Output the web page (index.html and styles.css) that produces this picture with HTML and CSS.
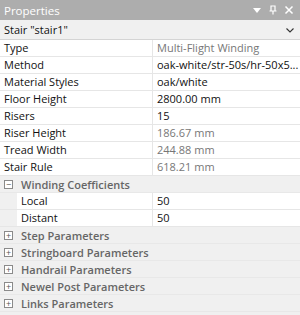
FILE: index.html
```html
<!DOCTYPE html>
<html>
<head>
<meta charset="utf-8">
<link rel="stylesheet" href="styles.css">
</head>
<body>
<div class="panel">
  <div class="title">
    <span class="title-text">Properties</span>
    <span class="title-icons">
      <svg width="10" height="10" viewBox="0 0 10 10"><path d="M1 3 L9 3 L5 8 Z" fill="#fff"/></svg>
      <svg width="10" height="10" viewBox="0 0 10 10"><path d="M3 1 H7 V6 H3 Z M1.5 6 H8.5 M5 6 V9.5" stroke="#fff" stroke-width="1.2" fill="none"/></svg>
      <svg width="10" height="10" viewBox="0 0 10 10"><path d="M1.5 1.5 L8.5 8.5 M8.5 1.5 L1.5 8.5" stroke="#fff" stroke-width="1.5"/></svg>
    </span>
  </div>
  <div class="combo">
    <span>Stair "stair1"</span>
    <svg width="10" height="8" viewBox="0 0 10 8"><path d="M1.5 2.5 L5 6 L8.5 2.5" stroke="#333" stroke-width="1.1" fill="none"/></svg>
  </div>
  <div class="grid">
    <div class="row"><div class="k">Type</div><div class="v ro">Multi-Flight Winding</div></div>
    <div class="row"><div class="k">Method</div><div class="v">oak-white/str-50s/hr-50x5...</div></div>
    <div class="row"><div class="k">Material Styles</div><div class="v">oak/white</div></div>
    <div class="row"><div class="k">Floor Height</div><div class="v">2800.00 mm</div></div>
    <div class="row"><div class="k">Risers</div><div class="v">15</div></div>
    <div class="row"><div class="k">Riser Height</div><div class="v ro">186.67 mm</div></div>
    <div class="row"><div class="k">Tread Width</div><div class="v ro">244.88 mm</div></div>
    <div class="row"><div class="k">Stair Rule</div><div class="v ro">618.21 mm</div></div>
    <div class="cat"><span class="box">&minus;</span><span class="cat-text">Winding Coefficients</span></div>
    <div class="row sub"><div class="k">Local</div><div class="v">50</div></div>
    <div class="row sub"><div class="k">Distant</div><div class="v">50</div></div>
    <div class="cat"><span class="box">+</span><span class="cat-text">Step Parameters</span></div>
    <div class="cat"><span class="box">+</span><span class="cat-text">Stringboard Parameters</span></div>
    <div class="cat"><span class="box">+</span><span class="cat-text">Handrail Parameters</span></div>
    <div class="cat"><span class="box">+</span><span class="cat-text">Newel Post Parameters</span></div>
    <div class="cat"><span class="box">+</span><span class="cat-text">Links Parameters</span></div>
  </div>
</div>
</body>
</html>
```
FILE: styles.css
```css
html, body { margin: 0; padding: 0; }
body {
  width: 300px; height: 315px; overflow: hidden;
  background: #f0f0f0;
  font-family: "Open Sans", "Noto Sans", sans-serif;
  font-size: 11px;
  color: #111;
}
.panel { width: 300px; height: 315px; background: #f0f0f0; }
.title {
  height: 20px; background: #adadad; color: #fff;
  display: flex; align-items: center; justify-content: space-between;
  padding: 0 6px 0 4px; box-sizing: border-box;
  font-size: 11.5px;
}
.title-icons { display: flex; gap: 6px; align-items: center; }
.combo {
  height: 20px; box-sizing: border-box;
  background: #f0f0f0; border-bottom: 1px solid #d4d4d4;
  display: flex; align-items: center; justify-content: space-between;
  padding: 0 5px 0 4px;
}
.grid { display: flex; flex-direction: column; }
.row {
  height: 17px; display: flex; box-sizing: border-box;
  border-bottom: 1px solid #e6e6e6; background: #fff;
}
.row .k { width: 148px; padding-left: 4px; border-right: 1px solid #e6e6e6; line-height: 16px; white-space: nowrap; }
.row .v { flex: 1; padding-left: 4px; line-height: 16px; white-space: nowrap; overflow: hidden; }
.row .v.ro { color: #777; }
.row.sub { background: #f0f0f0; }
.row.sub .k { width: 131px; margin-left: 17px; background: #fff; padding-left: 4px; }
.row.sub .v { background: #fff; }
.cat {
  height: 17px; display: flex; align-items: center; box-sizing: border-box;
  background: #f0f0f0; border-bottom: 1px solid #e8e8e8;
  color: #666; font-weight: 600;
}
.box {
  width: 9px; height: 9px; margin-left: 4px; margin-right: 8px; box-sizing: border-box;
  border: 1px solid #8a8a8a; background: #fff; color: #555;
  display: flex; align-items: center; justify-content: center;
  font-size: 9px; line-height: 7px; font-weight: 400;
}
```
